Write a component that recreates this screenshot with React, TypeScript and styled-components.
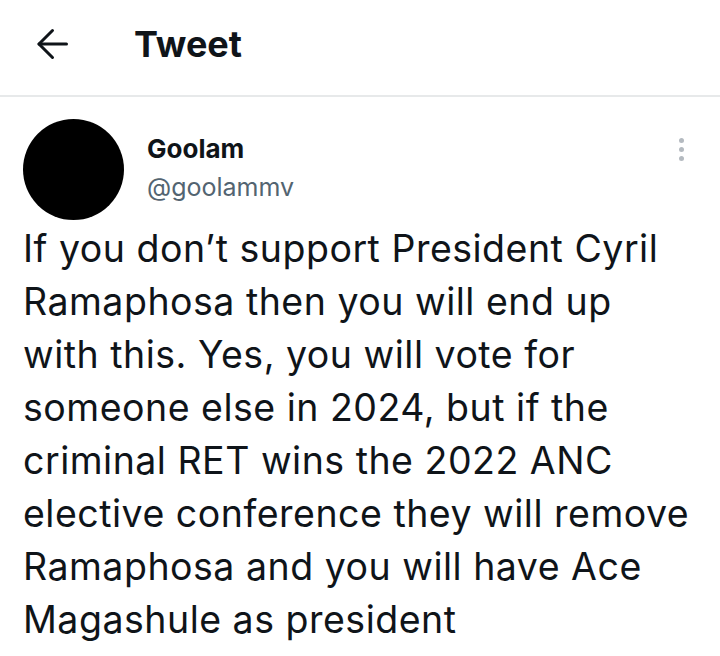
import styled, { createGlobalStyle } from 'styled-components';

const Global = createGlobalStyle`
  html, body {
    margin: 0;
    padding: 0;
    background: #ffffff;
  }
  body {
    font-family: Inter, Roboto, "Noto Sans", sans-serif;
    color: #0f1419;
  }
`;

const Page = styled.div`
  width: 720px;
  height: 656px;
  overflow: hidden;
  background: #fff;
`;

const Header = styled.header`
  height: 95px;
  display: flex;
  align-items: center;
  border-bottom: 2px solid #e7e9ea;
  padding-left: 36px;
  box-sizing: content-box;
`;

const BackButton = styled.button`
  border: 0;
  background: none;
  padding: 0;
  width: 34px;
  height: 34px;
  display: flex;
  align-items: center;
  justify-content: flex-start;
  margin-right: 64px;
  margin-top: -8px;
  color: #0f1419;
`;

const Title = styled.h1`
  margin: -8px 0 0 0;
  font-size: 36px;
  font-weight: 700;
`;

const Tweet = styled.article`
  padding: 22px 24px 0 23px;
`;

const AuthorRow = styled.div`
  display: flex;
  align-items: flex-start;
`;

const Avatar = styled.div`
  width: 101px;
  height: 101px;
  border-radius: 50%;
  background: #000;
  flex-shrink: 0;
`;

const Names = styled.div`
  flex: 1;
  margin-left: 23px;
  padding-top: 13px;
  display: flex;
  flex-direction: column;
`;

const DisplayName = styled.span`
  font-size: 26px;
  font-weight: 700;
  line-height: 34px;
`;

const Handle = styled.span`
  font-size: 25px;
  color: #536471;
  line-height: 34px;
  margin-top: 4px;
`;

const More = styled.div`
  display: flex;
  flex-direction: column;
  gap: 4px;
  margin-top: 19px;
  margin-right: 12px;
`;

const Dot = styled.span`
  width: 5px;
  height: 5px;
  border-radius: 50%;
  background: #b4bac0;
`;

const Body = styled.p`
  margin: 2px 0 0 0;
  font-size: 37.5px;
  letter-spacing: 0.5px;
  line-height: 53px;
  color: #0f1419;
`;

const Line = styled.span`
  display: block;
  white-space: nowrap;
`;

const lines = [
  'If you don’t support President Cyril',
  'Ramaphosa then you will end up',
  'with this. Yes, you will vote for',
  'someone else in 2024, but if the',
  'criminal RET wins the 2022 ANC',
  'elective conference they will remove',
  'Ramaphosa and you will have Ace',
  'Magashule as president',
];

export default function App() {
  return (
    <Page>
      <Global />
      <Header>
        <BackButton aria-label="Back">
          <svg width="32" height="32" viewBox="0 0 32 32" fill="none" stroke="currentColor" strokeWidth="3" strokeLinecap="round" strokeLinejoin="round">
            <path d="M30.5 16H3" />
            <path d="M16.5 2.5L3 16L16.5 29.5" />
          </svg>
        </BackButton>
        <Title>Tweet</Title>
      </Header>
      <Tweet>
        <AuthorRow>
          <Avatar />
          <Names>
            <DisplayName>Goolam</DisplayName>
            <Handle>@goolammv</Handle>
          </Names>
          <More>
            <Dot />
            <Dot />
            <Dot />
          </More>
        </AuthorRow>
        <Body>
          {lines.map((l) => (
            <Line key={l}>{l}</Line>
          ))}
        </Body>
      </Tweet>
    </Page>
  );
}
